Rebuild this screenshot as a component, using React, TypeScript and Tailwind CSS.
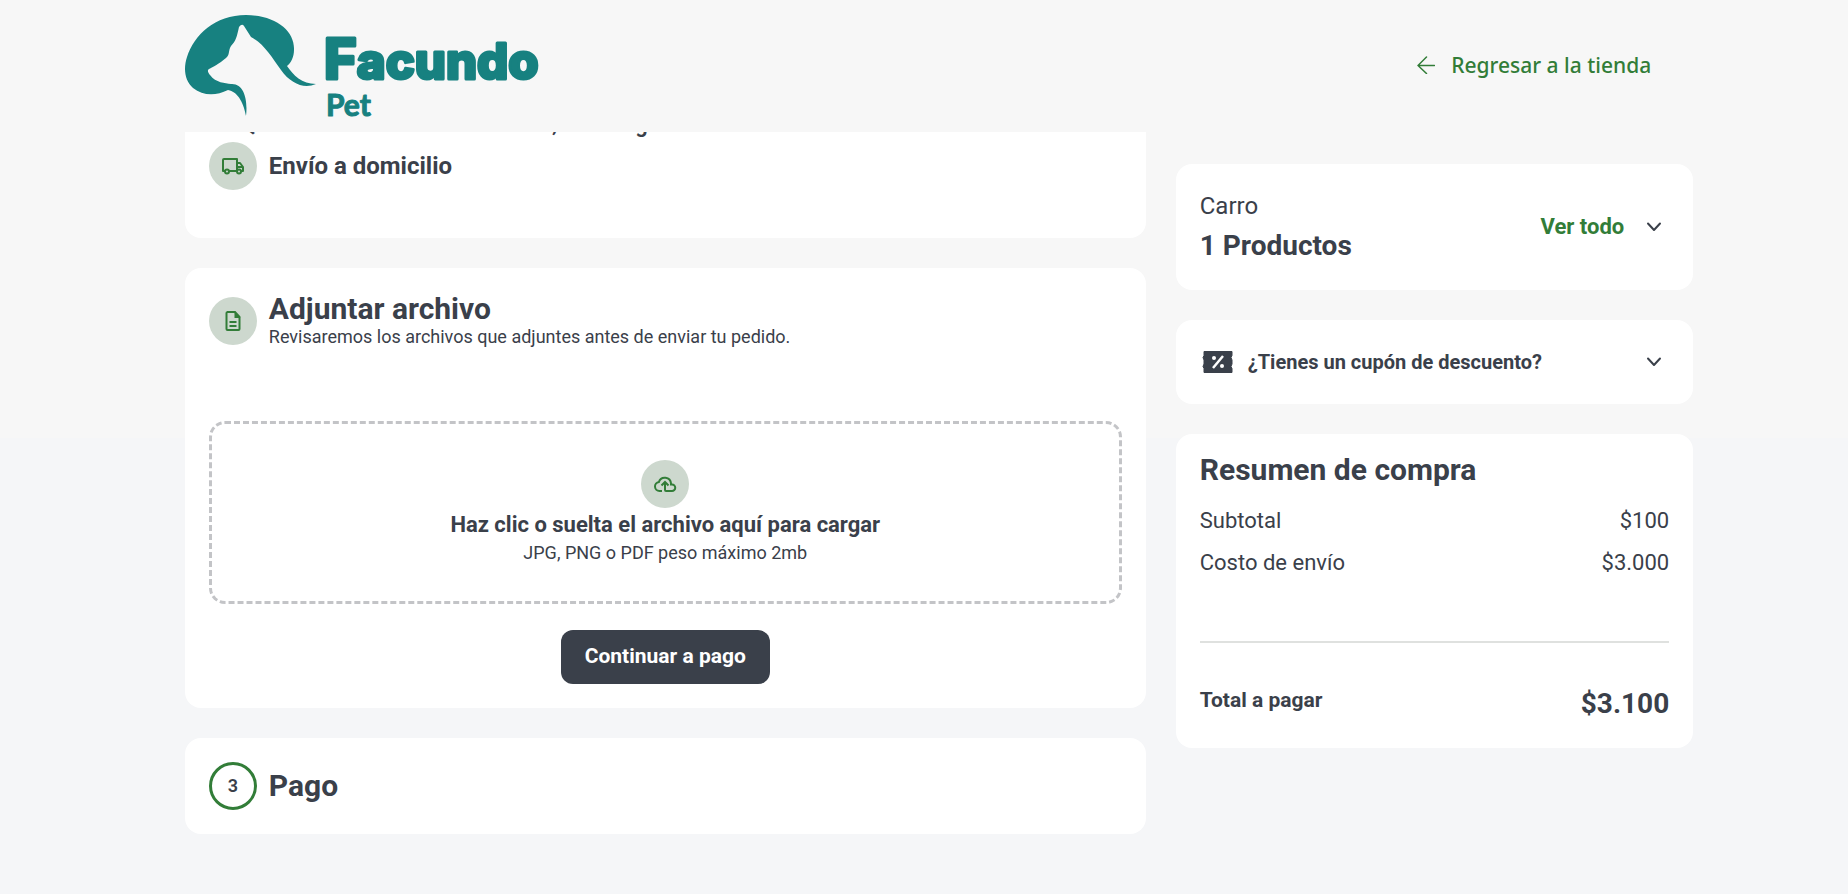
import type { ReactNode } from 'react';

const icons = {
  truck: (
    <svg width="24" height="24" viewBox="0 0 24 24" fill="none" stroke="currentColor" strokeWidth="2" strokeLinejoin="round">
      <path d="M4 17H2V6a1 1 0 0 1 1-1h13v12M8 17h8M16 9h3l3 4v4h-2" />
      <circle cx="6" cy="17.500" r="2" />
      <circle cx="18" cy="17.500" r="2" />
      <path d="M17 13h5" />
    </svg>
  ),
  file: (
    <svg width="24" height="24" viewBox="0 0 24 24" fill="none" stroke="currentColor" strokeWidth="2">
      <path d="M6 3h8l4.500 5v12a1 1 0 0 1-1 1H6.500a1 1 0 0 1-1-1V4a1 1 0 0 1 1-1z" />
      <path d="M13.500 2v7h6z" fill="currentColor" stroke="none" />
      <path d="M8.500 13h7M8.500 17h7" />
    </svg>
  ),
  cloud: (
    <svg width="24" height="24" viewBox="0 0 24 24" fill="none" stroke="currentColor" strokeWidth="2">
      <path d="M9 19H6.500a4.500 4.500 0 0 1-.6-8.960 6.200 6.200 0 0 1 12.100 1.400v1.060h1a3.250 3.250 0 0 1 0 6.500h-6a1 1 0 0 1-1-1V11" />
      <path d="M8.500 13.500L12 10l3.500 3.500" />
    </svg>
  ),
};

function Badge({ children }: { children: ReactNode }) {
  return (
    <span className="flex size-12 shrink-0 items-center justify-center rounded-full bg-[#cdd8ce] text-[#327d38]">
      {children}
    </span>
  );
}

function Chevron() {
  return (
    <svg width="16" height="16" viewBox="0 0 16 16" fill="none" stroke="#3a404a" strokeWidth="2" strokeLinecap="round" strokeLinejoin="round">
      <path d="M2 4.500L8 11l6-6.500" />
    </svg>
  );
}

function Logo() {
  return (
    <svg width="376" height="124" viewBox="0 0 376 124" role="img" aria-label="Facundo Pet" fill="#178180">
      <path
        transform="translate(0 11)"
        d="M61 0C91 0 110 16 109 35C109 42 106 48 102 51C108 60 117 69 131 69C119 74 106 69 96 55C86 41 79 29 66 22L59 11Q57 8 54 12C52 21 51 26 46 31C43 36 45 40 41 43C34 49 28 52 24 54C22 55 23 58 25 60C31 68 40 68 46 69C59 68 63 85 61 101C59 90 54 77 43 75C31 81 18 81 8 73C0 66 -2 54 2 42C9 20 30 0 61 0Z"
      />
      <g stroke="#178180" strokeLinejoin="round">
        <text x="139" y="75" fontSize="49" fontWeight="800" strokeWidth="3" fontFamily="Inter, sans-serif">
          <tspan fontSize="56">F</tspan>acundo
        </text>
        <text x="141" y="112" fontSize="30" fontWeight="700" strokeWidth="1" fontFamily="Lato, sans-serif">Pet</text>
      </g>
    </svg>
  );
}

export default function App() {
  return (
    <div className="min-h-screen bg-[linear-gradient(#f7f7f7_438px,#f5f6f8_438px)] font-[Roboto,sans-serif] text-[#3a404a]">
      <header className="flex h-[132px] items-center justify-between px-[10%]">
        <a href="#inicio">
          <Logo />
        </a>
        <a href="#tienda" className="mr-3 flex items-center gap-4 pb-[3px] font-['Noto_Sans',sans-serif] text-[21px] leading-7 font-medium text-[#327d38]">
          <svg width="18" height="18" viewBox="0 0 18 18" fill="none" stroke="currentColor" strokeWidth="1.500" strokeLinecap="round" strokeLinejoin="round">
            <path d="M9.500 1L1 9.500l8.500 8M1 9.500h16.500" />
          </svg>
          Regresar a la tienda
        </a>
      </header>

      <div className="mr-[calc(10%-30px)] ml-[10%] grid grid-cols-[65fr_35fr] items-start gap-[30px] pb-15">
        <main className="flex flex-col gap-[30px]">
          <section className="rounded-b-2xl bg-white px-6 pb-12">
            <p className="mb-1 flex h-1.5 items-end overflow-hidden pl-8 text-[22px] leading-[26px] font-semibold" aria-hidden="true">
              <span>Q</span>
              <span className="ml-[296px]">,</span>
              <span className="ml-[78px]">g</span>
            </p>
            <div className="flex items-center gap-3">
              <Badge>{icons.truck}</Badge>
              <h2 className="text-2xl font-bold">Envío a domicilio</h2>
            </div>
          </section>

          <section className="rounded-2xl bg-white p-6">
            <div className="flex items-center gap-3">
              <Badge>{icons.file}</Badge>
              <div className="pb-[3px]">
                <h2 className="text-[30px] leading-[34px] font-bold">Adjuntar archivo</h2>
                <p className="text-lg leading-[21px]">Revisaremos los archivos que adjuntes antes de enviar tu pedido.</p>
              </div>
            </div>
            <label className="mt-[71px] flex cursor-pointer flex-col items-center rounded-2xl border-3 border-dashed border-[#c3c4c7] pt-9 pb-[37px]">
              <input type="file" accept=".jpg,.png,.pdf" className="sr-only" />
              <Badge>{icons.cloud}</Badge>
              <span className="text-[22px] leading-[34px] font-bold">Haz clic o suelta el archivo aquí para cargar</span>
              <span className="text-lg leading-[22px]">JPG, PNG o PDF peso máximo 2mb</span>
            </label>
            <button type="button" className="mx-auto mt-[26px] block h-[54px] rounded-xl bg-[#3a404a] px-6 text-[21px] font-bold text-white">
              Continuar a pago
            </button>
          </section>

          <section className="flex items-center gap-3 rounded-2xl bg-white p-6">
            <span className="flex size-12 items-center justify-center rounded-full border-3 border-[#327d38] text-lg font-semibold">3</span>
            <h2 className="text-[30px] leading-9 font-bold">Pago</h2>
          </section>
        </main>

        <aside className="mt-8 flex flex-col gap-[30px]">
          <section className="flex items-center justify-between rounded-2xl bg-white py-[23px] pr-[31px] pl-6">
            <div>
              <p className="text-2xl leading-[38px]">Carro</p>
              <h2 className="text-[28px] leading-[42px] font-bold">1 Productos</h2>
            </div>
            <button type="button" className="flex items-center gap-[22px] text-[22px] leading-7 font-bold text-[#327d38]">
              Ver todo
              <Chevron />
            </button>
          </section>

          <button type="button" className="flex h-[84px] items-center rounded-2xl bg-white pr-[31px] pl-6 text-xl font-bold">
            <svg width="36" height="24" viewBox="0 0 36 24" fill="none" className="mr-3">
              <path d="M4 1.500h28v4l-1 2 1 2.500v4l-1 2.500 1 2v4H4v-4l-1-2L4 14v-4L3 7.500l1-2z" fill="#3a404a" stroke="#3a404a" strokeLinejoin="round" />
              <path d="M13 18L23 6" stroke="white" strokeWidth="2.500" />
              <circle cx="14" cy="8" r="2" fill="white" />
              <circle cx="22" cy="16" r="2" fill="white" />
            </svg>
            ¿Tienes un cupón de descuento?
            <span className="ml-auto">
              <Chevron />
            </span>
          </button>

          <section className="rounded-2xl bg-white px-6 pt-[18px] pb-[23px]">
            <h2 className="text-[30px] leading-9 font-bold">Resumen de compra</h2>
            <dl className="pt-3 text-[22px] leading-[42px]">
              <div className="flex justify-between">
                <dt>Subtotal</dt>
                <dd>$100</dd>
              </div>
              <div className="flex justify-between">
                <dt>Costo de envío</dt>
                <dd>$3.000</dd>
              </div>
              <div className="mt-[57px] flex justify-between border-t-2 border-[#dfe1df] pt-10 font-bold">
                <dt className="text-[21px] leading-[34px]">Total a pagar</dt>
                <dd className="text-[28px]">$3.100</dd>
              </div>
            </dl>
          </section>
        </aside>
      </div>
    </div>
  );
}
